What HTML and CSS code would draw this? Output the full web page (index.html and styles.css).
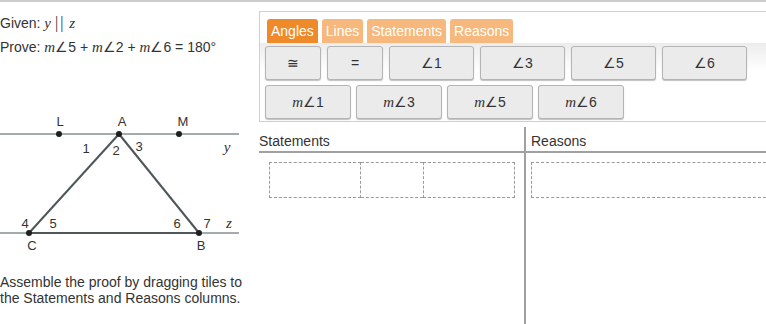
FILE: index.html
```html
<!DOCTYPE html>
<html lang="en">
<head>
    <meta charset="UTF-8">
    <title>Triangle Proof</title>
    <link rel="stylesheet" href="styles.css">
</head>
<body>
    <div class="page">
        <div class="problem">
            <div class="line">Given: <span class="var">y</span> <span class="bars">||</span> <span class="var">z</span></div>
            <div class="line">Prove: <span class="var">m</span>∠5 + <span class="var">m</span>∠2 + <span class="var">m</span>∠6 = 180°</div>

            <svg class="diagram" width="259" height="150" viewBox="0 0 259 150">
                <line x1="0" y1="29" x2="239" y2="29" class="ray"/>
                <line x1="0" y1="128" x2="239" y2="128" class="ray"/>
                <line x1="29" y1="128" x2="199" y2="128" class="side"/>
                <line x1="119" y1="29" x2="29" y2="128" class="side"/>
                <line x1="119" y1="29" x2="199" y2="128" class="side"/>
                <circle cx="59" cy="29" r="3"/>
                <circle cx="119" cy="29" r="3"/>
                <circle cx="179" cy="29" r="3"/>
                <circle cx="29" cy="128" r="3"/>
                <circle cx="199" cy="128" r="3"/>
                <text x="60" y="16">L</text>
                <text x="122" y="16">A</text>
                <text x="183" y="16">M</text>
                <text x="86" y="43">1</text>
                <text x="116" y="45">2</text>
                <text x="139" y="41">3</text>
                <text x="227" y="42" class="italic">y</text>
                <text x="25" y="118">4</text>
                <text x="53" y="118">5</text>
                <text x="177" y="118">6</text>
                <text x="207" y="118">7</text>
                <text x="229" y="118" class="italic">z</text>
                <text x="32" y="140">C</text>
                <text x="201" y="140">B</text>
            </svg>

            <p class="hint">Assemble the proof by dragging tiles to the Statements and Reasons columns.</p>
        </div>

        <div class="workspace">
            <div class="toolbox">
                <div class="tabs">
                    <div class="tab active">Angles</div>
                    <div class="tab">Lines</div>
                    <div class="tab">Statements</div>
                    <div class="tab">Reasons</div>
                </div>
                <div class="tiles">
                    <div class="tile-row">
                        <div class="tile narrow">≅</div>
                        <div class="tile narrow">=</div>
                        <div class="tile">∠1</div>
                        <div class="tile">∠3</div>
                        <div class="tile">∠5</div>
                        <div class="tile">∠6</div>
                    </div>
                    <div class="tile-row tight">
                        <div class="tile measure"><span class="var">m</span>∠1</div>
                        <div class="tile measure"><span class="var">m</span>∠3</div>
                        <div class="tile measure"><span class="var">m</span>∠5</div>
                        <div class="tile measure"><span class="var">m</span>∠6</div>
                    </div>
                </div>
            </div>

            <div class="proof">
                <div class="column statements">
                    <div class="column-head">Statements</div>
                    <div class="drop-row">
                        <div class="slot wide"></div>
                        <div class="slot mid"></div>
                        <div class="slot wide"></div>
                    </div>
                </div>
                <div class="column reasons">
                    <div class="column-head">Reasons</div>
                    <div class="drop-row">
                        <div class="slot full"></div>
                    </div>
                </div>
            </div>
        </div>
    </div>
</body>
</html>
```

FILE: styles.css
```css
/* Page */
body {
    margin: 0;
    font-family: 'Liberation Sans', Arial, sans-serif;
    font-size: 14px;
    color: #333333;
    border-top: 2px solid #cccccc;
    overflow: hidden;
    height: 322px;
}

.page {
    display: flex;
    width: 766px;
}

/* Left problem column */
.problem {
    flex: none;
    width: 259px;
    padding-top: 9px;
}

.line {
    line-height: 24px;
}

.var {
    font-family: 'Liberation Serif', 'Times New Roman', serif;
    font-style: italic;
    font-size: 15px;
}

.bars {
    font-family: 'Liberation Serif', serif;
    font-size: 16px;
    letter-spacing: 2px;
}

.diagram {
    display: block;
    margin-top: 46px;
}

.diagram .ray {
    stroke: #a3abad;
    stroke-width: 2;
}

.diagram .side {
    stroke: #4d5759;
    stroke-width: 2;
}

.diagram circle {
    fill: #1f1f1f;
}

.diagram text {
    font-family: 'Liberation Sans', Arial, sans-serif;
    font-size: 13px;
    fill: #333333;
    text-anchor: middle;
    dominant-baseline: central;
}

.diagram text.italic {
    font-family: 'Liberation Serif', serif;
    font-style: italic;
    font-size: 15px;
}

.hint {
    margin: 19px 0 0;
    line-height: 16px;
    width: 250px;
}

/* Right workspace */
.workspace {
    flex: 1;
    min-width: 0;
}

.toolbox {
    margin-top: 9px;
    border: 1px solid #cfcfcf;
    border-right: none;
    padding: 7px 0 2px;
}

.tabs {
    display: flex;
    gap: 4px;
    padding-left: 7px;
}

.tab {
    height: 24px;
    line-height: 24px;
    padding: 0 4px;
    color: #ffffff;
    background: #f6b87c;
    border-radius: 3px 3px 0 0;
}

.tab.active {
    background: #ef8a2a;
}

.tiles {
    padding: 3px 0 0 5px;
    background: linear-gradient(to bottom, #ececec 0, #ffffff 28px);
}

.tile-row {
    display: flex;
    gap: 6px;
}

.tile-row.tight {
    gap: 5px;
    margin-top: 5px;
}

.tile {
    width: 83px;
    height: 32px;
    line-height: 32px;
    text-align: center;
    background: #ebebeb;
    border: 1px solid #b4b4b4;
    border-radius: 3px;
    box-shadow: 0 1px 1px rgba(0, 0, 0, 0.25);
}

.tile.narrow {
    width: 54px;
}

.tile.measure {
    width: 84px;
}

/* Proof columns */
.proof {
    display: flex;
    margin-top: 5px;
    height: 197px;
}

.column {
    flex: none;
}

.statements {
    width: 265px;
    border-right: 2px solid #a0a0a0;
}

.reasons {
    flex: 1;
}

.column-head {
    padding-top: 4px;
    line-height: 20px;
    border-bottom: 2px solid #a0a0a0;
}

.reasons .column-head {
    padding-left: 5px;
}

.drop-row {
    display: flex;
    margin-top: 9px;
    padding: 0 9px 0 10px;
}

.reasons .drop-row {
    padding: 0 0 0 5px;
}

.slot {
    height: 34px;
    border: 1px dashed #9a9a9a;
}

.slot.wide {
    width: 91px;
}

.slot.mid {
    width: 62px;
    border-left: none;
    border-right: none;
}

.slot.full {
    flex: 1;
    border-right: none;
}
```
